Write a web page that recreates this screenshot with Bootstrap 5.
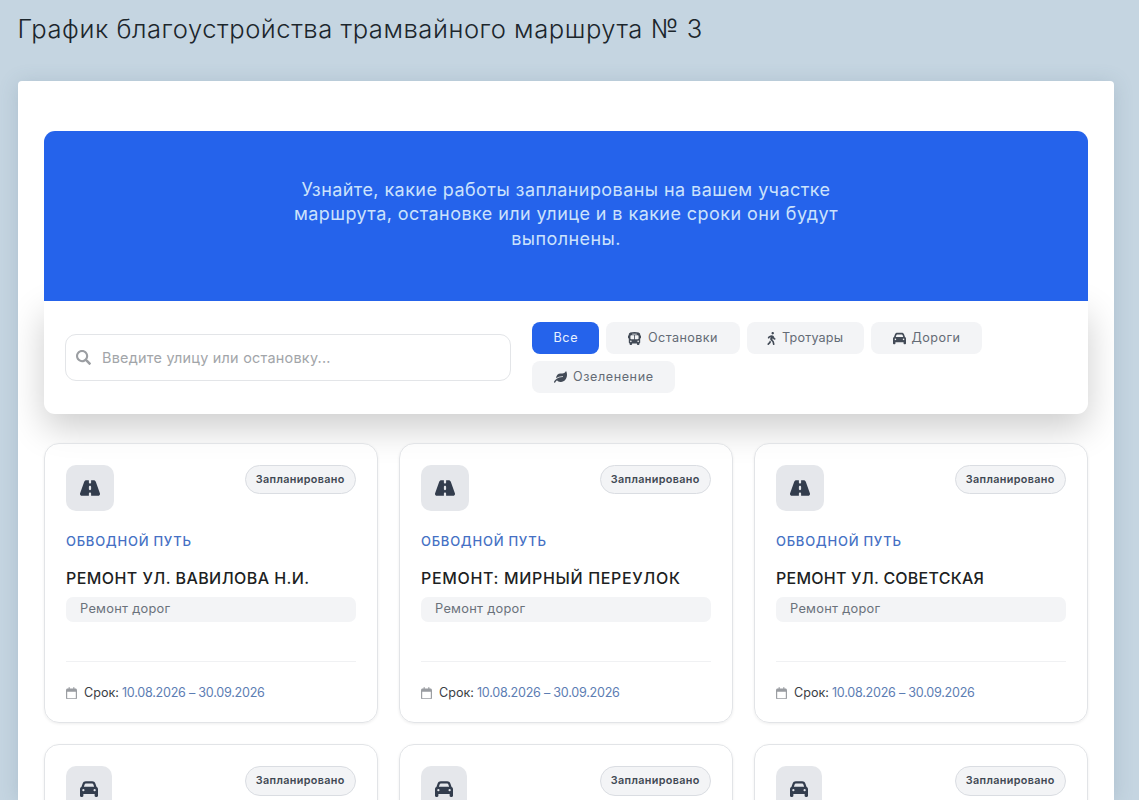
<!DOCTYPE html>
<html lang="ru">
<head>
<meta charset="utf-8">
<meta name="viewport" content="width=device-width, initial-scale=1">
<title>График благоустройства</title>
<link rel="stylesheet" href="https://cdn.jsdelivr.net/npm/bootstrap@5.3.0/dist/css/bootstrap.min.css">
<style>
  body { background: #c5d5e1; font-family: Inter, "Open Sans", sans-serif; color: #212529; height: 100vh; overflow: hidden; }
  svg { fill: currentColor; flex: none; display: block; }
  .page-title { font-size: 25.6px; font-weight: 300; line-height: 32px; letter-spacing: .53px; padding: 13px 0 0 17.5px; margin-bottom: 36px; color: #1c262c; }
  .panel { margin: 0 25px 0 18px; padding: 50px 26px 0 26px; border-radius: 4px 4px 0 0; height: 719px; overflow: hidden; box-shadow: 0 2px 20px rgba(70, 100, 125, .2); }
  .hero { background: #2563eb; color: #cbe2fc; height: 170px; padding-top: 46.5px; border-radius: 11px 11px 0 0; font-size: 18px; line-height: 24.9px; letter-spacing: .43px; }
  .filters { height: 113px; padding: 0 21px; gap: 21px; border-radius: 0 0 11px 11px; box-shadow: 0 14px 36px rgba(0, 0, 0, .2); }
  .search { width: 446px; height: 47px; border: 1px solid #e3e5e8; border-radius: 11px; padding: 0 10px; gap: 11px; color: #9b9ea2; }
  .search input { font-size: 14.4px; letter-spacing: .25px; outline: 0; background: none; padding: 0; color: inherit; }
  .search input::placeholder { color: #a2a5a9; opacity: 1; }
  .chips { gap: 7px; }
  .chip { height: 32px; padding: 0 0 0 21.5px; border: 0; border-radius: 8px; background: #f3f4f6; color: #646b75; font-size: 12.6px; line-height: 32px; }
  .chip svg { color: #434b57; }
  .chip.active { background: #2563eb; color: #e8f0ff; width: 67px; letter-spacing: .6px; }
  .chip-stops { width: 133.5px; letter-spacing: .419px; }
  .chip-walk { width: 117.5px; letter-spacing: .169px; padding-left: 20px; }
  .chip-roads { width: 110.5px; letter-spacing: .447px; }
  .chip-green { width: 142.5px; letter-spacing: .577px; }
  .works { display: grid; grid-template-columns: repeat(3, 1fr); gap: 21px; margin-top: 28.5px; }
  .work { height: 280.5px; border: 1px solid #e2e4e7; border-radius: 15px; padding: 21px; box-shadow: 0 1px 3px rgba(0, 0, 0, .07); background: rgba(255, 255, 255, .6); }
  .tile { width: 48px; height: 46.5px; border-radius: 10px; background: #e5e7eb; color: #333d4d; }
  .tile-car { width: 46px; }
  .status { height: 29.5px; width: 111.5px; border: 1px solid #dadde2; border-radius: 15px; background: #f3f4f6; color: #414954; font-size: 10.8px; font-weight: 600; letter-spacing: .348px; line-height: 27px; }
  .route { font-size: 13px; font-weight: 500; letter-spacing: .75px; color: #4570c4; line-height: 18px; margin-top: 20.5px; }
  .work-title { font-size: 16px; font-weight: 500; line-height: 22px; color: #1d1f23; margin: 17.5px 0 8px; white-space: nowrap; }
  .kind { height: 24.5px; border-radius: 7px; background: #f3f4f6; color: #6a717b; font-size: 12.8px; letter-spacing: .28px; line-height: 24px; padding-left: 14px; }
  .term { border-top: 1px solid #f0f1f3; margin-top: 39.5px; padding-top: 22px; font-size: 12.6px; line-height: 18px; color: #3a3e44; }
  .term svg { color: #999ca1; margin-right: 7px; }
  .dates { color: #5c7db3; letter-spacing: -.251px; margin-left: 3px; }
</style>
</head>
<body>
<svg class="d-none">
  <symbol id="i-road" viewBox="0 0 576 512"><path d="M256 32H181.2c-27.1 0-51.3 17.1-60.3 42.6L3.1 407.2C1.1 413 0 419.2 0 425.4C0 455.5 24.5 480 54.6 480H256V416c0-17.7 14.3-32 32-32s32 14.3 32 32v64H521.4c30.2 0 54.6-24.5 54.6-54.6c0-6.2-1.1-12.4-3.1-18.2L455.1 74.6C446 49.1 421.9 32 394.8 32H320V96c0 17.7-14.3 32-32 32s-32-14.3-32-32V32zm64 192v64c0 17.7-14.3 32-32 32s-32-14.3-32-32V224c0-17.7 14.3-32 32-32s32 14.3 32 32z"/></symbol>
  <symbol id="i-car" viewBox="0 0 512 512"><path d="M135.2 117.4L109.1 192H402.9l-26.1-74.6C372.3 104.6 360.2 96 346.6 96H165.4c-13.6 0-25.7 8.6-30.2 21.4zM39.6 196.8L74.8 96.3C88.3 57.8 124.6 32 165.4 32H346.6c40.8 0 77.1 25.8 90.6 64.3l35.2 100.5c23.2 9.6 39.6 32.5 39.6 59.2V448c0 17.7-14.3 32-32 32H448c-17.7 0-32-14.3-32-32V400H96v48c0 17.7-14.3 32-32 32H32c-17.7 0-32-14.3-32-32V256c0-26.7 16.4-49.6 39.6-59.2zM128 288a32 32 0 1 0 -64 0 32 32 0 1 0 64 0zm288 32a32 32 0 1 0 0-64 32 32 0 1 0 0 64z"/></symbol>
  <symbol id="i-bus" viewBox="32 0 512 512"><path d="M288 0C422.4 0 512 35.2 512 80v48c17.7 0 32 14.3 32 32v64c0 17.7-14.3 32-32 32v160c0 17.7-14.3 32-32 32v32c0 17.7-14.3 32-32 32H416c-17.7 0-32-14.3-32-32V448H192v32c0 17.7-14.3 32-32 32H128c-17.7 0-32-14.3-32-32v-32c-17.7 0-32-14.3-32-32V256c-17.7 0-32-14.3-32-32V160c0-17.7 14.3-32 32-32V80C64 35.2 153.6 0 288 0zM128 160v96c0 17.7 14.3 32 32 32H272V128H160c-17.7 0-32 14.3-32 32zM304 288H416c17.7 0 32-14.3 32-32V160c0-17.7-14.3-32-32-32H304V288zM144 400a32 32 0 1 0 0-64 32 32 0 1 0 0 64zm288 0a32 32 0 1 0 0-64 32 32 0 1 0 0 64zM384 80c0-8.8-7.2-16-16-16H208c-8.8 0-16 7.2-16 16s7.2 16 16 16H368c8.8 0 16-7.2 16-16z"/></symbol>
  <symbol id="i-cal" viewBox="0 0 448 512"><path d="M152 24c0-13.3-10.7-24-24-24s-24 10.7-24 24V64H64C28.7 64 0 92.7 0 128V448c0 35.3 28.7 64 64 64H384c35.3 0 64-28.7 64-64V128c0-35.3-28.7-64-64-64H344V24c0-13.3-10.7-24-24-24s-24 10.7-24 24V64H152V24zM48 192H400V448c0 8.8-7.2 16-16 16H64c-8.8 0-16-7.2-16-16V192z"/></symbol>
</svg>

<h1 class="page-title">График благоустройства трамвайного маршрута № 3</h1>

<main class="panel bg-white">
  <section>
    <div class="hero text-center position-relative">
      Узнайте, какие работы запланированы на вашем участке<br>
      маршрута, остановке или улице и в какие сроки они будут<br>
      выполнены.
    </div>
    <div class="filters bg-white d-flex align-items-center">
      <label class="search d-flex align-items-center flex-shrink-0">
        <svg width="15" height="15" viewBox="0 0 512 512"><path d="M505 442.7L405.3 343c-4.5-4.5-10.6-7-17-7H372c27.6-35.3 44-79.7 44-128C416 93.1 322.9 0 208 0S0 93.1 0 208s93.1 208 208 208c48.3 0 92.7-16.4 128-44v16.3c0 6.4 2.5 12.5 7 17l99.7 99.7c9.4 9.4 24.6 9.4 33.9 0l28.3-28.3c9.4-9.4 9.4-24.6.1-34zM208 346c-76 0-138-62-138-138 0-76 62-138 138-138 76 0 138 62 138 138 0 76-62 138-138 138z"/></svg>
        <input class="border-0 flex-grow-1" type="text" placeholder="Введите улицу или остановку...">
      </label>
      <div class="chips d-flex flex-wrap">
        <button class="chip active text-start">Все</button>
        <button class="chip chip-stops d-flex align-items-center"><svg width="13" height="13" style="margin-right:7.5px"><use href="#i-bus"/></svg>Остановки</button>
        <button class="chip chip-walk d-flex align-items-center"><svg width="9" height="13" viewBox="0 0 320 512" style="margin-right:6.5px"><path d="M208 96c26.5 0 48-21.5 48-48S234.5 0 208 0s-48 21.5-48 48 21.5 48 48 48zm94.5 149.1l-23.3-11.8-9.7-29.4c-14.7-44.6-55.7-75.8-102.2-75.9-36-.1-55.9 10.1-93.3 25.2-21.6 8.7-39.3 25.2-49.7 46.2L17.6 213c-7.8 15.8-1.5 35 14.2 42.9 15.6 7.9 34.6 1.5 42.5-14.3L81 228c3.5-7 9.3-12.5 16.5-15.4l26.8-10.8-15.2 60.7c-5.2 20.8.4 42.9 14.9 58.8l59.9 65.4c7.2 7.9 12.3 17.4 14.9 27.7l18.3 73.3c4.3 17.1 21.7 27.6 38.8 23.3 17.1-4.3 27.6-21.7 23.3-38.8l-22.2-89c-2.6-10.3-7.7-19.9-14.9-27.7l-45.5-49.7 17.2-68.7 5.5 16.5c5.3 16.1 16.7 29.4 31.7 37l23.3 11.8c15.6 7.9 34.6 1.5 42.5-14.3 7.7-15.7 1.4-35.1-14.3-43zM73.6 385.8c-3.2 8.1-8 15.4-14.2 21.5l-50 50.1c-12.5 12.5-12.5 32.8 0 45.3s32.7 12.5 45.2 0l59.4-59.4c6.1-6.1 10.9-13.4 14.2-21.5l13.5-33.8c-55.3-60.3-38.7-41.8-47.4-53.7l-20.7 51.5z"/></svg>Тротуары</button>
        <button class="chip chip-roads d-flex align-items-center"><svg width="13" height="13" style="margin-right:6px"><use href="#i-car"/></svg>Дороги</button>
        <button class="chip chip-green d-flex align-items-center"><svg width="13" height="12" viewBox="0 0 576 512" style="margin-right:6.5px"><path d="M546.2 9.7c-5.6-12.5-21.6-13-28.3-1.2C486.9 62.4 431.4 96 368 96h-80C182 96 96 182 96 288c0 7 .8 13.7 1.5 20.5C161.3 262.8 253.4 224 384 224c8.8 0 16 7.2 16 16s-7.2 16-16 16C132.6 256 26 410.1 2.4 468c-6.6 16.3 1.2 34.9 17.5 41.6 16.4 6.8 35-1.1 41.8-17.3 1.5-3.6 20.9-47.9 71.9-90.6 32.4 43.9 94 85.8 174.9 77.2C465.5 467.5 576 326.7 576 154.3c0-50.2-10.8-102.2-29.8-144.6z"/></svg>Озеленение</button>
      </div>
    </div>
  </section>

  <section class="works">
    <article class="work">
      <div class="d-flex justify-content-between align-items-start">
        <div class="tile d-flex align-items-center justify-content-center"><svg width="20" height="18"><use href="#i-road"/></svg></div>
        <span class="status text-center">Запланировано</span>
      </div>
      <div class="route">ОБВОДНОЙ ПУТЬ</div>
      <h2 class="work-title" style="letter-spacing:.43px">РЕМОНТ УЛ. ВАВИЛОВА Н.И.</h2>
      <div class="kind">Ремонт дорог</div>
      <div class="term d-flex align-items-center"><svg width="11" height="12.5"><use href="#i-cal"/></svg>Срок: <span class="dates">10.08.2026 – 30.09.2026</span></div>
    </article>
    <article class="work">
      <div class="d-flex justify-content-between align-items-start">
        <div class="tile d-flex align-items-center justify-content-center"><svg width="20" height="18"><use href="#i-road"/></svg></div>
        <span class="status text-center">Запланировано</span>
      </div>
      <div class="route">ОБВОДНОЙ ПУТЬ</div>
      <h2 class="work-title" style="letter-spacing:.66px">РЕМОНТ: МИРНЫЙ ПЕРЕУЛОК</h2>
      <div class="kind">Ремонт дорог</div>
      <div class="term d-flex align-items-center"><svg width="11" height="12.5"><use href="#i-cal"/></svg>Срок: <span class="dates">10.08.2026 – 30.09.2026</span></div>
    </article>
    <article class="work">
      <div class="d-flex justify-content-between align-items-start">
        <div class="tile d-flex align-items-center justify-content-center"><svg width="20" height="18"><use href="#i-road"/></svg></div>
        <span class="status text-center">Запланировано</span>
      </div>
      <div class="route">ОБВОДНОЙ ПУТЬ</div>
      <h2 class="work-title" style="letter-spacing:.24px">РЕМОНТ УЛ. СОВЕТСКАЯ</h2>
      <div class="kind">Ремонт дорог</div>
      <div class="term d-flex align-items-center"><svg width="11" height="12.5"><use href="#i-cal"/></svg>Срок: <span class="dates">10.08.2026 – 30.09.2026</span></div>
    </article>
    <article class="work d-flex justify-content-between align-items-start">
      <div class="tile tile-car d-flex align-items-center justify-content-center"><svg width="18" height="18"><use href="#i-car"/></svg></div>
      <span class="status text-center">Запланировано</span>
    </article>
    <article class="work d-flex justify-content-between align-items-start">
      <div class="tile tile-car d-flex align-items-center justify-content-center"><svg width="18" height="18"><use href="#i-car"/></svg></div>
      <span class="status text-center">Запланировано</span>
    </article>
    <article class="work d-flex justify-content-between align-items-start">
      <div class="tile tile-car d-flex align-items-center justify-content-center"><svg width="18" height="18"><use href="#i-car"/></svg></div>
      <span class="status text-center">Запланировано</span>
    </article>
  </section>
</main>
<script src="https://cdn.jsdelivr.net/npm/bootstrap@5.3.0/dist/js/bootstrap.bundle.min.js"></script>
</body>
</html>
